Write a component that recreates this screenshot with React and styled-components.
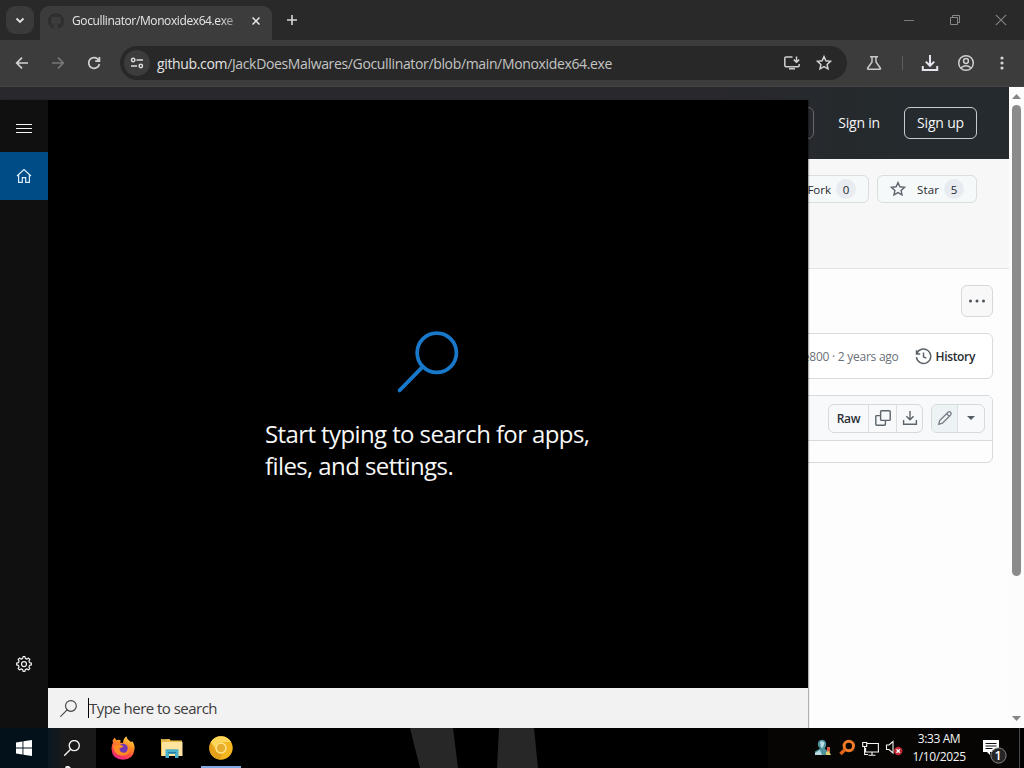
import React from "react";
import styled, { createGlobalStyle } from "styled-components";

const Global = createGlobalStyle`
  * { box-sizing: border-box; }
  body { margin: 0; background: #000; overflow: hidden; }
  svg { display: block; flex: none; }
`;

const Desktop = styled.div`
  position: relative;
  width: 1024px;
  height: 768px;
  display: flex;
  flex-direction: column;
  background: #000;
  overflow: hidden;
  font-family: "Open Sans", "Noto Sans", sans-serif;
`;

const Label = styled.span`
  display: block;
  flex: none;
  white-space: pre;
  padding-top: ${(p) => p.$drop || 0}px;
  font-size: ${(p) => p.$size || 12}px;
  font-weight: ${(p) => p.$weight || 400};
  letter-spacing: ${(p) => p.$track || 0}px;
  color: ${(p) => p.$color || "inherit"};
  line-height: ${(p) => p.$line || 16}px;
`;

const UrlHost = styled.span`
  color: #e4e4e4;
`;

/* ---------- Browser ---------- */
const Browser = styled.div`
  height: 728px;
  display: flex;
  flex-direction: column;
  background: #fdfdfd;
`;

const TabStrip = styled.div`
  height: 40px;
  display: flex;
  align-items: flex-start;
  padding: 6px 0 0 6px;
  background: #292929;
`;

const TabMenu = styled.div`
  width: 28px;
  height: 28px;
  display: grid;
  place-items: center;
  border-radius: 9px;
  background: #3a3a3a;
`;

const Tab = styled.div`
  width: 232px;
  height: 34px;
  margin-left: 6px;
  padding: 0 12px 5px 8px;
  display: flex;
  align-items: center;
  border-radius: 9px 9px 0 0;
  background: #3c3c3c;
  color: #e6e6e6;
`;

const TabTitle = styled.div`
  width: 163px;
  margin-left: 8px;
  margin-right: 17px;
  overflow: hidden;
  mask-image: linear-gradient(90deg, #000 90%, rgba(0, 0, 0, 0.5));
`;

const NewTab = styled.div`
  width: 28px;
  height: 28px;
  display: grid;
  place-items: center;
  margin-left: 6px;
`;

const WindowButtons = styled.div`
  height: 28px;
  margin-left: auto;
  margin-right: 17px;
  display: flex;
  align-items: center;
  gap: 34px;
`;

const Toolbar = styled.div`
  height: 47px;
  padding: 0 14px 1px 14px;
  display: flex;
  align-items: center;
  background: #3c3c3c;
  box-shadow: inset 0 -1px #444446;
`;

const NavButtons = styled.div`
  display: flex;
  gap: 20px;
`;

const Omnibox = styled.div`
  width: 727px;
  height: 34px;
  margin-left: 18px;
  padding: 0 15px 0 4px;
  display: flex;
  align-items: center;
  border-radius: 17px;
  background: #282828;
`;

const SiteInfo = styled.div`
  width: 26px;
  height: 26px;
  display: grid;
  place-items: center;
  margin-right: 7px;
  border-radius: 50%;
  background: #3c3c3c;
`;

const OmniActions = styled.div`
  display: flex;
  margin-left: auto;
  gap: 15px;
`;

const ToolbarActions = styled.div`
  display: flex;
  align-items: center;
  margin-left: 18px;
`;

const Separator = styled.div`
  width: 1px;
  height: 14px;
  margin: 0 18px 0 19px;
  background: #5c5c5c;
`;

/* ---------- Page ---------- */
const Viewport = styled.div`
  flex: 1;
  display: flex;
  min-height: 0;
`;

const Page = styled.div`
  width: 1009px;
  display: flex;
  flex-direction: column;
`;

const SiteHeader = styled.div`
  height: 72px;
  padding: 0 32px 0 0;
  display: flex;
  align-items: center;
  justify-content: flex-end;
  color: #f4f6f7;
  background: linear-gradient(90deg, #28282d 0 70%, #242a2d 90%);
`;

const SearchField = styled.div`
  width: 120px;
  height: 32px;
  margin-right: 24px;
  border: 1px solid #68656e;
  border-radius: 6px;
`;

const SignUp = styled.div`
  width: 73px;
  height: 32px;
  margin-left: 24px;
  display: grid;
  place-items: center;
  border: 1px solid #c9ccce;
  border-radius: 6px;
`;

const RepoHeader = styled.div`
  height: 110px;
  padding: 16px 32px 0 0;
  display: flex;
  align-items: flex-start;
  justify-content: flex-end;
  gap: 8px;
  background: #f7f7f7;
  border-bottom: 1px solid #e3e4e5;
`;

const CountButton = styled.div`
  width: 100px;
  height: 28px;
  padding-right: ${(p) => p.$end}px;
  display: flex;
  align-items: center;
  justify-content: flex-end;
  border: 1px solid #dadee1;
  border-radius: 6px;
  background: #f6f9fa;
  color: #25292e;
`;

const Count = styled.div`
  width: 20px;
  height: 20px;
  display: grid;
  place-items: center;
  margin-left: 5px;
  border-radius: 10px;
  background: #e8ecf0;
`;

const FileArea = styled.div`
  padding: 16px 16px 0 0;
  display: flex;
  flex-direction: column;
  align-items: flex-end;
  gap: 16px;
`;

const MoreButton = styled.div`
  width: 32px;
  height: 32px;
  display: grid;
  place-items: center;
  border: 1px solid #d6d8da;
  border-radius: 6px;
  background: #f8f8f9;
`;

const CommitBox = styled.div`
  width: 300px;
  height: 46px;
  padding-right: 17px;
  display: flex;
  align-items: center;
  justify-content: flex-end;
  border: 1px solid #dadcde;
  border-radius: 6px;
  background: #fff;
`;

const History = styled.div`
  display: flex;
  align-items: center;
  gap: 4px;
  margin-left: 16px;
`;

const FileBox = styled.div`
  width: 300px;
  height: 68px;
  border: 1px solid #d7d9db;
  border-radius: 6px;
  overflow: hidden;
`;

const FileHeader = styled.div`
  height: 45px;
  padding: 0 7px;
  display: flex;
  align-items: center;
  justify-content: flex-end;
  gap: 8px;
  background: #f7f9fa;
  border-bottom: 1px solid #d7dadd;
`;

const ButtonGroup = styled.div`
  height: 29px;
  display: flex;
  border: 1px solid #d5dadd;
  border-radius: 6px;
  overflow: hidden;
  background: #f7f9fb;
`;

const GroupItem = styled.div`
  width: ${(p) => p.$w}px;
  display: grid;
  place-items: center;
  background: ${(p) => (p.$muted ? "#edf2f5" : "transparent")};
  & + & { border-left: 1px solid #dadfe2; }
`;

const Scrollbar = styled.div`
  width: 15px;
  padding: 7px 0 7px;
  display: flex;
  flex-direction: column;
  align-items: center;
  justify-content: space-between;
  background: #fcfcfc;
`;

const Thumb = styled.div`
  width: 9px;
  height: 471px;
  margin: 6px 0 auto;
  border-radius: 5px;
  background: #8b8b8b;
`;

/* ---------- Search panel ---------- */
const SearchPanel = styled.div`
  position: absolute;
  left: 0;
  top: 100px;
  width: 808px;
  height: 628px;
  display: flex;
  background: #000;
  box-shadow: 1px 0 1px rgba(0, 0, 0, 0.3);
`;

const Rail = styled.div`
  width: 48px;
  padding: 4px 0 40px;
  display: flex;
  flex-direction: column;
  background: #101010;
`;

const RailItem = styled.div`
  height: 48px;
  display: grid;
  place-items: center;
  background: ${(p) => (p.$active ? "#004c87" : "transparent")};
  ${(p) => p.$bottom && "margin-top: auto;"}
`;

const PanelMain = styled.div`
  width: 760px;
  display: flex;
  flex-direction: column;
`;

const Prompt = styled.div`
  flex: 1;
  display: flex;
  flex-direction: column;
  align-items: center;
  padding-top: 231px;
  color: #f7f7f7;
`;

const PromptText = styled.div`
  width: 326px;
  margin-top: 25px;
`;

const SearchBar = styled.div`
  height: 40px;
  padding-left: 12px;
  display: flex;
  align-items: center;
  background: #f2f2f2;
`;

const Caret = styled.div`
  width: 1px;
  height: 20px;
  margin-left: 11px;
  background: #000;
`;

/* ---------- Taskbar ---------- */
const Taskbar = styled.div`
  position: relative;
  height: 40px;
  display: flex;
  background: #000;
`;

const WallpaperShapes = styled.svg`
  position: absolute;
  left: 400px;
  top: 0;
`;

const PointerTip = styled.svg`
  position: absolute;
  left: 64px;
  bottom: 0;
`;

const TaskItem = styled.div`
  width: ${(p) => p.$w || 48}px;
  margin-right: ${(p) => p.$gap || 0}px;
  height: 40px;
  display: grid;
  place-items: center;
  background: ${(p) => p.$bg || "transparent"};
  box-shadow: ${(p) => (p.$open ? "inset 0 -2px #7fa8e4" : "none")};
`;

const Tray = styled.div`
  margin-left: auto;
  height: 40px;
  padding: 0 10px 0 46px;
  display: flex;
  align-items: center;
  gap: 6px;
  color: #f5f5f5;
  background: #060503;
  border-right: 1px solid #000;
`;

const Clock = styled.div`
  width: 62px;
  display: flex;
  flex-direction: column;
  align-items: center;
  gap: 2px;
  margin-left: -1px;
  margin-right: 6px;
`;

const ShowDesktop = styled.div`
  width: 5px;
  border-left: 1px solid #4c4c4c;
`;

const Svg = ({ w = 16, h = w, vb, sw = 1.6, color = "#d0d0d0", children, ...rest }) => (
  <svg width={w} height={h} viewBox={vb || `0 0 ${w} ${h}`} fill="none" stroke={color} strokeWidth={sw} {...rest}>
    {children}
  </svg>
);

const AccountIcon = styled(Svg)`
  margin-left: 18px;
`;

const MenuIcon = styled(Svg)`
  margin-left: 25px;
`;

const StarIcon = styled(Svg)`
  margin-right: 11px;
`;

const Magnifier = ({ size, color, sw }) => (
  <Svg w={size} vb="0 0 60 60" color={color} sw={sw}>
    <circle cx="38.5" cy="21" r="19" />
    <path d="M25 34.5 L2.5 57.5" strokeLinecap="round" />
  </Svg>
);

const STAR = "M8 1.6 9.9 5.8 14.5 6.3 11.1 9.4 12 13.9 8 11.6 4 13.9 4.9 9.4 1.5 6.3 6.1 5.8Z";

function BrowserWindow() {
  return (
    <Browser>
      <TabStrip>
        <TabMenu>
          <Svg w={10} color="#e0e0e0" sw={1.8}><path d="M1.5 3.5 5 7 8.5 3.5" /></Svg>
        </TabMenu>
        <Tab>
          <Svg w={16} vb="0 0 16 16" stroke="none">
            <path fill="#2f2f2f" d="M8 0c4.42 0 8 3.58 8 8a8.01 8.01 0 0 1-5.45 7.59c-.4.08-.55-.17-.55-.38 0-.27.01-1.13.01-2.2 0-.75-.25-1.23-.54-1.48 1.78-.2 3.65-.88 3.65-3.95 0-.88-.31-1.59-.82-2.15.08-.2.36-1.02-.08-2.12 0 0-.67-.22-2.2.82-.64-.18-1.32-.27-2-.27s-1.36.09-2 .27c-1.53-1.03-2.2-.82-2.2-.82-.44 1.1-.16 1.92-.08 2.12-.51.56-.82 1.28-.82 2.15 0 3.06 1.86 3.75 3.64 3.95-.23.2-.44.55-.51 1.07-.46.21-1.61.55-2.33-.66-.15-.24-.6-.83-1.23-.82-.67.01-.27.38.01.53.34.19.73.9.82 1.13.16.45.68 1.31 2.69.94 0 .67.01 1.3.01 1.49 0 .21-.15.45-.55.38A7.995 7.995 0 0 1 0 8c0-4.42 3.58-8 8-8Z" />
          </Svg>
          <TabTitle><Label $size={12} $track={-0.39}>Gocullinator/Monoxidex64.exe</Label></TabTitle>
          <Svg w={8} color="#e8e8e8" sw={1.5}><path d="M.5.5 7.5 7.5M7.5.5.5 7.5" /></Svg>
        </Tab>
        <NewTab><Svg w={12} color="#d8d8d8" sw={1.6}><path d="M6 1v10M1 6h10" /></Svg></NewTab>
        <WindowButtons>
          <Svg w={12} color="#7a7a7a" sw={1}><path d="M1 6.5h10" /></Svg>
          <Svg w={12} color="#888" sw={1}><path d="M1.5 3.5h7v7h-7zM3.5 3.5v-2h7v7h-2" /></Svg>
          <Svg w={12} color="#848484" sw={1.1}><path d="M.8.8 11.2 11.2M11.2.8.8 11.2" /></Svg>
        </WindowButtons>
      </TabStrip>
      <Toolbar>
        <NavButtons>
          <Svg color="#d2d2d2" sw={1.7}><path d="M14 8H3M8 2.7 2.7 8 8 13.3" /></Svg>
          <Svg color="#777" sw={1.7}><path d="M2 8h11M8 2.7 13.3 8 8 13.3" /></Svg>
          <Svg color="#d2d2d2" sw={1.7}><path d="M12.8 5.3A5.4 5.4 0 1 0 13.4 9M13.4 2v4.2H9.2" /></Svg>
        </NavButtons>
        <Omnibox>
          <SiteInfo>
            <Svg w={14} color="#dadada" sw={1.5}><circle cx="3.2" cy="4" r="1.7" /><path d="M6.5 4H13M1 10h6" /><circle cx="10.8" cy="10" r="1.7" /></Svg>
          </SiteInfo>
          <Label $size={14} $track={-0.35} $color="#c4c4c4" $line={20} $drop={1}><UrlHost>github.com</UrlHost>/JackDoesMalwares/Gocullinator/blob/main/Monoxidex64.exe</Label>
          <OmniActions>
            <Svg w={18} h={16} color="#d0d0d0" sw={1.5}><path d="M9.5 2H3Q1.8 2 1.8 3V10.5Q1.8 11.7 3 11.7H15Q16.2 11.7 16.2 10.5V9M13.5 1.5V7M10.8 4.6 13.5 7.3 16.2 4.6M6 13.8h6" /></Svg>
            <Svg color="#d2d2d2" sw={1.5}><path d={STAR} /></Svg>
          </OmniActions>
        </Omnibox>
        <ToolbarActions>
          <Svg w={18} h={16} color="#c8c8c8" sw={1.5}><path d="M5 1.8h8M7 2v5L2.6 13.2Q2.2 14.2 3.2 14.2H14.8Q15.8 14.2 15.4 13.2L11 7V2" /></Svg>
          <Separator />
          <Svg w={18} h={18} color="#e4e3ee" sw={2}><path d="M9 1v10.5M4.8 7.6 9 11.8 13.2 7.6M1.8 12v4h14.4v-4" /></Svg>
          <AccountIcon w={18} color="#cfcfcf" sw={1.5}><circle cx="9" cy="9" r="7.3" /><circle cx="9" cy="7" r="2.4" /><path d="M4 14Q9 9.5 14 14" /></AccountIcon>
          <MenuIcon w={4} h={16} stroke="none"><g fill="#d4d4d4"><circle cx="2" cy="3" r="1.6" /><circle cx="2" cy="8" r="1.6" /><circle cx="2" cy="13" r="1.6" /></g></MenuIcon>
        </ToolbarActions>
      </Toolbar>
      <Viewport>
        <Page>
          <SiteHeader>
            <SearchField />
            <Label $size={14} $track={-0.2}>Sign in</Label>
            <SignUp><Label $size={14} $track={-0.2}>Sign up</Label></SignUp>
          </SiteHeader>
          <RepoHeader>
            <CountButton $end={12}><Label $size={11.5} $weight={500} $drop={1}>Fork</Label><Count><Label $size={11.5} $weight={500} $drop={1}>0</Label></Count></CountButton>
            <CountButton $end={12}>
              <StarIcon color="#5f666d" sw={1.4}><path d={STAR} /></StarIcon>
              <Label $size={11.5} $weight={500} $track={0.1} $drop={1}>Star</Label><Count><Label $size={11.5} $weight={500} $drop={1}>5</Label></Count>
            </CountButton>
          </RepoHeader>
          <FileArea>
            <MoreButton><Svg w={18} h={4} stroke="none"><g fill="#4c5259"><circle cx="2.5" cy="2" r="1.5" /><circle cx="9" cy="2" r="1.5" /><circle cx="15.5" cy="2" r="1.5" /></g></Svg></MoreButton>
            <CommitBox>
              <Label $size={12} $track={-0.25} $drop={2} $color="#6b7178">e800 · 2 years ago</Label>
              <History>
                <Svg w={17} vb="0 0 16 16" color="#5c636a" sw={1.4}><path d="M1.4 2.2v3.5h3.5M1.6 5.6A6.8 6.8 0 1 1 1.3 8.6M8 4.3v4.2l2.7 1" /></Svg>
                <Label $size={12} $weight={600} $track={-0.35} $drop={2} $color="#292d32">History</Label>
              </History>
            </CommitBox>
            <FileBox>
              <FileHeader>
                <ButtonGroup>
                  <GroupItem $w={39}><Label $size={12} $weight={600} $track={-0.3} $drop={2} $color="#2c3035">Raw</Label></GroupItem>
                  <GroupItem $w={28}><Svg color="#5c646b" sw={1.4}><rect x="5.6" y=".8" width="9.6" height="9.6" rx="1" /><path d="M5.6 5.6H1.8Q.8 5.6.8 6.6V14.2Q.8 15.2 1.8 15.2H9.4Q10.4 15.2 10.4 14.2V10.4" /></Svg></GroupItem>
                  <GroupItem $w={26}><Svg color="#5c646b" sw={1.4}><path d="M8 1v8.5M4.4 6.2 8 9.8 11.6 6.2M1.6 10v4.2h12.8V10" /></Svg></GroupItem>
                </ButtonGroup>
                <ButtonGroup>
                  <GroupItem $w={25} $muted><Svg color="#747c83" sw={1.3}><path d="M1.7 14.3 2.7 10.6 11 2.3Q12.3 1 13.6 2.3T13.6 5L5.4 13.2ZM9.6 3.7l2.7 2.7" /></Svg></GroupItem>
                  <GroupItem $w={27}><Svg w={8} h={4} stroke="none"><path fill="#555c63" d="M0 0h8L4 4z" /></Svg></GroupItem>
                </ButtonGroup>
              </FileHeader>
            </FileBox>
          </FileArea>
        </Page>
        <Scrollbar>
          <Svg w={9} h={5} stroke="none"><path fill="#858585" d="M0 5h9L4.5 0z" /></Svg>
          <Thumb />
          <Svg w={9} h={5} stroke="none"><path fill="#858585" d="M0 0h9L4.5 5z" /></Svg>
        </Scrollbar>
      </Viewport>
    </Browser>
  );
}

const gearPoints = (() => {
  const pts = [];
  for (let i = 0; i < 8; i++) {
    [[-15, 7.4], [-9, 5.8], [9, 5.8], [15, 7.4]].forEach(([d, r]) => {
      const a = ((i * 45 + 22.5 + d) * Math.PI) / 180;
      pts.push(`${(8 + r * Math.cos(a)).toFixed(2)},${(8 + r * Math.sin(a)).toFixed(2)}`);
    });
  }
  return pts.join(" ");
})();

function StartSearch() {
  return (
    <SearchPanel>
      <Rail>
        <RailItem><Svg w={16} h={10} color="#f5f5f5" sw={1}><path d="M0 1.5h16M0 5.5h16M0 9.5h16" /></Svg></RailItem>
        <RailItem $active><Svg w={16} color="#d9efff" sw={1.2}><path d="M1 8 8 1.5 15 8M2.6 7v7.4H6.3V9.6H9.7V14.4H13.4V7" /></Svg></RailItem>
        <RailItem $bottom><Svg w={16} color="#ececec" sw={1.25}><polygon points={gearPoints} strokeLinejoin="round" /><circle cx="8" cy="8" r="2.5" /></Svg></RailItem>
      </Rail>
      <PanelMain>
        <Prompt>
          <Magnifier size={62} color="#1878ca" sw={3.6} />
          <PromptText>
            <Label $size={24} $track={-0.6} $line={32}>Start typing to search for apps,</Label>
            <Label $size={24} $track={-0.6} $line={32}>files, and settings.</Label>
          </PromptText>
        </Prompt>
        <SearchBar>
          <Magnifier size={17} color="#444" sw={4} />
          <Caret />
          <Label $size={15} $track={-0.53} $line={20} $color="#3d3d3d">Type here to search</Label>
        </SearchBar>
      </PanelMain>
    </SearchPanel>
  );
}

function SystemTaskbar() {
  return (
    <Taskbar>
      <WallpaperShapes width="150" height="40"><path fill="#272727" d="M10 0H53L58 40H20ZM99 0H134L138 40H97Z" /></WallpaperShapes>
      <TaskItem $bg="#03111b"><Svg w={16} stroke="none"><path fill="#fff" d="M0 2.4 6.5 1.4V7.5H0ZM7.4 1.2 16 0V7.5H7.4ZM0 8.5H6.5V14.6L0 13.6ZM7.4 8.5H16V16L7.4 14.8Z" /></Svg></TaskItem>
      <TaskItem $bg="linear-gradient(90deg,#0b1722,#191919 35%)" $gap={3}><Magnifier size={16} color="#f5f5f5" sw={5} /></TaskItem>
      <PointerTip width="8" height="2"><path fill="#e8e8e8" d="M2 0h3l2 2H1z" /></PointerTip>
      <TaskItem $gap={1}>
        <svg width="24" height="24" viewBox="0 0 24 24">
          <defs>
            <linearGradient id="fx" x1=".8" y1="0" x2=".3" y2="1"><stop offset="0" stopColor="#ffe14a" /><stop offset=".4" stopColor="#ff8a24" /><stop offset=".75" stopColor="#ff3f4d" /><stop offset="1" stopColor="#e5238b" /></linearGradient>
          </defs>
          <path fill="url(#fx)" d="M1.5 4.5Q3 2.5 3.7 1.7L5.5 4.3Q8 3.5 9.8 4.2L9 6.5L12 7Q12 3 15.3.2Q16 3.8 19.2 5.6Q20.8 6.4 21 5Q24 8.5 23.5 13Q22.5 23.5 12 23.7Q1 23.3.5 13Q.3 9 2 6.8Z" />
          <circle cx="12" cy="12.6" r="4.9" fill="#6f37b4" />
          <path fill="#ff8b23" d="M2 10Q6.5 8 10.8 9.3L12.6 10.5Q10.5 12 8.4 12.2Q8.8 17 13.5 16.8Q17 16 16.8 11Q20.5 16.5 15 19Q7.5 21 4 16Z" />
        </svg>
      </TaskItem>
      <TaskItem $gap={5}>
        <svg width="24" height="20" viewBox="0 0 24 20">
          <path fill="#eebd48" d="M1 1H9.5L10.5 2.5H22V18H1Z" /><path fill="#ffe4a0" d="M2 4H22.5V18H2Z" /><path fill="#bd9b52" d="M2 1.2h4.5v1.2H2z" />
          <path fill="#4bb0ca" d="M5.5 11.2H18.5V20H15V16H9V20H5.5Z" /><path fill="#287d9e" d="M8 14h8v1.3H8z" />
        </svg>
      </TaskItem>
      <TaskItem $open $w={40}>
        <svg width="24" height="24" viewBox="0 0 24 24">
          <circle cx="12" cy="12" r="11.7" fill="#f4b51f" /><path fill="#ffd657" d="M12 .3A11.7 11.7 0 0 1 22.1 6H12Q7 6 6 12L1.8 6.2A11.7 11.7 0 0 1 12 .3Z" />
          <path fill="#e5a019" d="M1.8 6.2 7 15Q10 19 14 17L11 23.6A11.7 11.7 0 0 1 1.8 6.2Z" />
          <circle cx="12" cy="12" r="5.7" fill="#ffe48b" /><circle cx="12" cy="12" r="4.2" fill="#e9ad2e" />
        </svg>
      </TaskItem>
      <Tray>
        <svg width="18" height="18" viewBox="0 0 18 18">
          <path fill="#4b929d" d="M4 7Q3 1 8 .8Q13 1 12 7L10.7 9.4 15 13V16H1V12.5L6 9.5Z" /><path fill="#b7dbe0" d="M6 3Q9 1 10.5 4L9 8.5H7ZM1 14 6 11 8 16H1Z" />
          <path fill="#d65a41" d="M13 8h3v5h-3z" /><path fill="#dfcf72" d="m12 13 3-1 2 4h-5z" />
        </svg>
        <svg width="18" height="18" viewBox="0 0 18 18" fill="none"><circle cx="10.8" cy="7" r="4.7" stroke="#f37b27" strokeWidth="3" /><path d="M7 10.5 2.5 15" stroke="#df6219" strokeWidth="3.4" /></svg>
        <Svg w={17} color="#f4f4f4" sw={1.1}><path d="M5 3.5H16.4V12H3.6V8M.7 2.5H4.7V6.5H.7ZM2.6 6.5V14.5H6M10 12v3M6.5 15.2h7" /></Svg>
        <Svg w={18} color="#f2f2f2" sw={1.1}><path d="M1.5 6H4L8 2.5V14L4 10.5H1.5Z" /><circle cx="13.2" cy="12" r="4.2" fill="#c42635" stroke="none" /><path stroke="#fff" strokeWidth="1.3" d="m11.5 10.3 3.4 3.4m0-3.4-3.4 3.4" /></Svg>
        <Clock><Label $size={12} $track={-0.4}>3:33 AM</Label><Label $size={12} $track={-0.4}>1/10/2025</Label></Clock>
        <svg width="26" height="32" viewBox="0 0 26 32">
          <path fill="#fff" d="M1 8H17V20H8V23L5 20H1Z" /><path stroke="#111" d="M3.5 11.5h11M3.5 14h11M3.5 16.5h7" />
          <circle cx="16.5" cy="23.5" r="7.6" fill="#262626" stroke="#858585" />
          <text x="16.2" y="28" textAnchor="middle" fontSize="12.5" fontWeight="600" fill="#fff" fontFamily="Open Sans">1</text>
        </svg>
      </Tray>
      <ShowDesktop />
    </Taskbar>
  );
}

export default function App() {
  return (
    <>
      <Global />
      <Desktop>
        <BrowserWindow />
        <StartSearch />
        <SystemTaskbar />
      </Desktop>
    </>
  );
}
